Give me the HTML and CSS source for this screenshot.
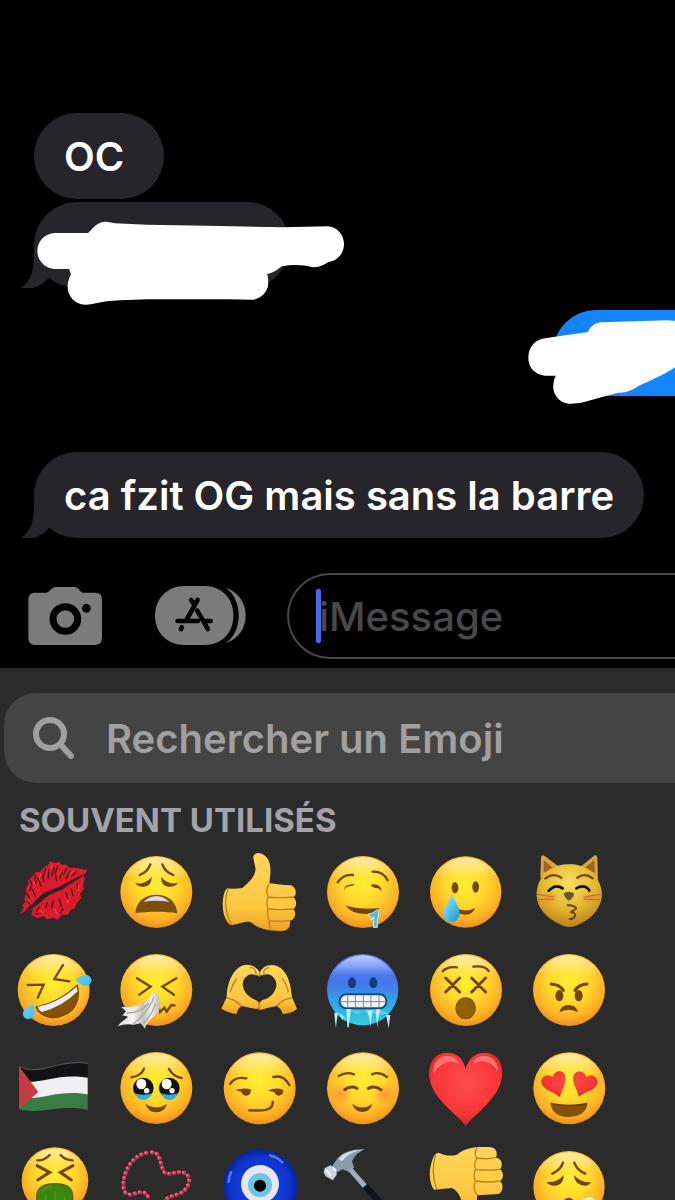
FILE: index.html
```
<!DOCTYPE html>
<html lang="fr">
<head>
    <meta charset="UTF-8">
    <meta name="viewport" content="width=device-width, initial-scale=1.0">
    <title>Messages</title>
    <link rel="stylesheet" href="styles.css">
</head>
<body>
    <svg class="defs" aria-hidden="true">
        <defs>
            <radialGradient id="face" cx="0.5" cy="0.38" r="0.64">
                <stop offset="0" stop-color="#ffee35"/>
                <stop offset="0.45" stop-color="#ffd82c"/>
                <stop offset="0.8" stop-color="#fcae26"/>
                <stop offset="1" stop-color="#e98a1a"/>
            </radialGradient>
            <linearGradient id="shine" x1="0" y1="0" x2="0" y2="1">
                <stop offset="0" stop-color="#fff" stop-opacity="0.6"/>
                <stop offset="0.3" stop-color="#fff" stop-opacity="0"/>
            </linearGradient>
            <linearGradient id="hand" x1="0" y1="0" x2="0" y2="1">
                <stop offset="0" stop-color="#ffd55a"/>
                <stop offset="0.7" stop-color="#fdc840"/>
                <stop offset="1" stop-color="#e9a023"/>
            </linearGradient>
            <linearGradient id="cold" x1="0" y1="0" x2="0" y2="1">
                <stop offset="0" stop-color="#5d80f5"/>
                <stop offset="0.4" stop-color="#4576ea"/>
                <stop offset="0.75" stop-color="#2cb0e6"/>
                <stop offset="1" stop-color="#2fd0dc"/>
            </linearGradient>
            <linearGradient id="drop" x1="0" y1="0" x2="1" y2="1">
                <stop offset="0" stop-color="#b5ecff"/>
                <stop offset="0.5" stop-color="#55c3f3"/>
                <stop offset="1" stop-color="#1c8fd6"/>
            </linearGradient>
            <radialGradient id="heart" cx="0.5" cy="0.4" r="0.65">
                <stop offset="0" stop-color="#ff4d4b"/>
                <stop offset="0.7" stop-color="#f83436"/>
                <stop offset="1" stop-color="#cf1626"/>
            </radialGradient>
            <radialGradient id="cat" cx="0.5" cy="0.3" r="0.7">
                <stop offset="0" stop-color="#f8e066"/>
                <stop offset="0.6" stop-color="#e2b62c"/>
                <stop offset="1" stop-color="#b98122"/>
            </radialGradient>
            <radialGradient id="blush">
                <stop offset="0" stop-color="#ff7a3c" stop-opacity="0.65"/>
                <stop offset="1" stop-color="#ff7a3c" stop-opacity="0"/>
            </radialGradient>
            <radialGradient id="bead" cx="0.5" cy="0.5" r="0.52">
                <stop offset="0" stop-color="#1446e0"/>
                <stop offset="0.75" stop-color="#0f35cf"/>
                <stop offset="1" stop-color="#0a1f8c"/>
            </radialGradient>
            <linearGradient id="tissue" x1="0" y1="0" x2="1" y2="0">
                <stop offset="0" stop-color="#d9d8d5"/>
                <stop offset="0.35" stop-color="#f7f6f3"/>
                <stop offset="0.6" stop-color="#c4c2be"/>
                <stop offset="0.8" stop-color="#f1f0ee"/>
                <stop offset="1" stop-color="#bdbbb8"/>
            </linearGradient>
        </defs>
    </svg>

    <main class="chat">
        <div class="bubble">OC</div>
        <div class="bubble hidden-text">
            <svg class="tail" viewBox="0 0 40 44"><path d="M14 0C14 22 14 35 1 44C13 46 22 42 29 34L40 22V0Z"/></svg>
            <svg class="scribble" viewBox="111 393 924 252"><path d="M162 429H264C280 414 292 394 320 395L345 400L440 404L660 408L850 412L985 409C1012 412 1033 435 1032 465C1030 494 1010 513 985 516C970 526 955 533 938 532C905 523 880 524 845 529C832 540 820 549 801 552C806 565 805 585 803 592C796 612 782 624 762 629L680 628H445L360 631L320 634C295 637 275 645 255 644C222 643 202 615 203 590C203 574 208 563 213 553L207 537H162C130 533 112 508 112 483C112 455 132 433 162 429Z"/></svg>
        </div>
        <div class="bubble sent">
            <svg class="scribble" viewBox="84 90 441 252"><path d="M525 92V232C490 256 450 272 415 288C395 303 375 308 350 309L250 337C230 341 218 342 206 341C175 338 157 310 160 285C161 272 163 264 168 257H135C104 254 85 232 85 204C85 170 106 147 140 144L264 126C271 108 287 98 306 97L500 91Z"/></svg>
        </div>
        <div class="bubble last">
            <svg class="tail" viewBox="0 0 40 44"><path d="M14 0C14 22 14 35 1 44C13 46 22 42 29 34L40 22V0Z"/></svg>
            ca fzit OG mais sans la barre
        </div>
    </main>

    <form class="composer">
        <button type="button" class="camera" aria-label="Appareil photo">
            <svg viewBox="84 78 222 180">
                <path fill="#7b7b7b" d="M104 98H138C150 98 152 81 168 81H222C238 81 238 98 250 98H286Q306 98 306 120V234Q306 255 284 255H106Q85 255 85 234V120Q85 98 104 98Z"/>
                <circle cx="196" cy="177" r="37" fill="none" stroke="#000" stroke-width="21"/>
                <circle cx="259" cy="145" r="13"/>
            </svg>
        </button>
        <button type="button" class="apps" aria-label="Applications">
            <svg viewBox="465 78 274 180">
                <path fill="#7b7b7b" d="M553 78H615C665 78 701 115 701 167S665 255 615 255H553C502 255 465 218 465 167S502 78 553 78Z"/>
                <path fill="#7b7b7b" d="M678 83C715 95 738 127 738 167S715 237 678 249C703 232 717 202 717 167S703 100 678 83Z"/>
                <g fill="none" stroke="#000" stroke-width="14" stroke-linecap="round">
                    <path d="M593 120L560 180M574 120L583 133M533 183H594M619 183H633M592 152L624 207M546 202L543 207"/>
                </g>
            </svg>
        </button>
        <div class="field">
            <input type="text" placeholder="iMessage" aria-label="iMessage">
            <span class="caret"></span>
        </div>
    </form>

    <section class="keyboard">
        <label class="search">
            <svg viewBox="0 0 42 42"><circle cx="17" cy="17" r="14"/><path d="M28 28L38 39"/></svg>
            <input type="text" placeholder="Rechercher un Emoji" aria-label="Rechercher un Emoji">
        </label>
        <h2>SOUVENT UTILISÉS</h2>
        <div class="emojis">
            <button aria-label="Bisou">
                <svg viewBox="39 36 240 240">
                    <path fill="#dc1c2c" d="M60 221L72 202L66 198L76 185L72 178L80 158L77 148L86 132L84 122L96 112L108 95L119 97L132 82L145 75L150 64L164 69L177 66L185 75L197 73L207 83L230 84L262 90L251 108L254 118L249 136L252 148L240 162L244 174L231 188L224 205L211 211L203 224L187 224L172 239L160 233L142 238L130 229L113 234L94 225L99 207L76 214Z"/>
                    <path fill="#2b2025" d="M76 210C104 190 120 161 149 151C182 144 210 119 258 100C235 119 209 132 190 147C164 159 148 162 135 174C120 188 103 205 76 214Z"/>
                    <path fill="none" stroke="#f0555c" stroke-width="3" d="M103 124L99 142M122 102L115 127M157 74L148 96M190 83L176 104M225 90L203 107M87 174L83 191M118 212L130 218M163 205L172 224M207 168L201 190M235 134L236 153"/>
                    <path fill="none" stroke="#47141d" stroke-width="4" d="M91 120L96 137L89 152M105 103L108 130M113 112L124 140M137 85L128 111L133 125M148 85L144 116M163 81L156 108M173 76L166 99L170 124M188 88L179 116M200 84L190 105M211 92L197 118M229 94L215 109M82 160L88 177M80 184L91 194M97 147L107 170M120 199L108 214M142 186L137 205M160 181L155 204M178 175L184 202M197 157L205 177M214 146L219 169M232 130L232 147M105 223L120 220M190 205L181 220"/>
                </svg>
            </button>
            <button aria-label="Visage épuisé">
                <svg viewBox="348 36 240 240">
                    <circle cx="469" cy="156" r="108" fill="url(#face)"/><circle cx="469" cy="156" r="104" fill="url(#shine)"/>
                    <path class="line" d="M419 105Q443 96 451 73M487 73Q495 96 520 105"/>
                    <path class="brown" d="M405 128Q431 137 455 111Q455 137 433 140Q414 142 405 128ZM483 111Q507 137 534 128Q525 142 505 140Q483 137 483 111Z"/>
                    <path fill="#79500c" d="M406 220C408 184 435 164 469 164S530 184 532 220C496 214 444 214 406 220Z"/>
                    <path fill="#d9d9e2" d="M430 186Q448 168 469 168T509 186Q470 178 430 186Z"/>
                </svg>
            </button>
            <button aria-label="Pouce levé">
                <svg viewBox="657 36 240 240">
                    <path fill="url(#hand)" d="M683 145C700 148 712 146 727 144C746 129 770 106 766 82L760 55C758 38 779 34 795 47C818 66 811 103 808 130C826 132 850 135 871 136C890 139 892 168 879 172C892 179 891 204 879 207C890 213 888 239 870 242C872 261 864 273 844 273C817 274 778 269 756 249C743 239 724 251 692 255C675 245 665 214 669 178C672 160 675 148 683 145Z"/>
                    <path class="crease" d="M806 134Q796 150 804 171Q798 190 804 207Q800 226 808 242Q806 258 812 270M804 171Q840 175 880 171M804 207Q840 211 878 207M808 242Q840 245 869 242M684 148C671 180 678 225 694 252"/>
                </svg>
            </button>
            <button aria-label="Visage qui bave">
                <svg viewBox="36 36 240 240">
                    <circle cx="159" cy="156" r="108" fill="url(#face)"/><circle cx="159" cy="156" r="104" fill="url(#shine)"/>
                    <path class="line" d="M83 127Q101 101 129 105M188 95Q220 94 233 121"/>
                    <path class="brown" d="M101 150Q104 132 135 132Q128 140 116 139Q107 141 101 150ZM181 134Q210 127 216 153Q205 142 194 143Q186 141 181 134ZM108 197Q157 211 208 204Q202 222 166 222Q122 220 108 197Z"/>
                    <path fill="#55b9e6" stroke="#c9f0fb" stroke-width="3" d="M174 223Q190 221 201 209Q209 211 205 229Q200 247 202 262H190Q192 241 191 229L185 240L180 230Z"/>
                </svg>
            </button>
            <button aria-label="Visage souriant avec larme">
                <svg viewBox="345 36 240 240">
                    <circle cx="467" cy="156" r="107" fill="url(#face)"/><circle cx="467" cy="156" r="103" fill="url(#shine)"/>
                    <ellipse class="brown" cx="435" cy="143" rx="10" ry="17"/><ellipse class="brown" cx="497" cy="141" rx="10" ry="17"/>
                    <path class="brown" d="M438 204Q468 219 495 204Q489 224 465 224Q447 224 438 214Z"/>
                    <path fill="url(#drop)" d="M425 163C438 190 450 206 449 222C447 239 436 246 424 246C409 246 399 235 399 220C400 203 415 190 425 163Z"/>
                </svg>
            </button>
            <button aria-label="Chat qui fait un bisou">
                <svg viewBox="654 36 240 240">
                    <path fill="#d9a43c" d="M691 115L693 52Q695 42 704 48L752 84ZM808 83L852 47Q861 43 862 53L864 118Z"/>
                    <path fill="#9c6520" d="M701 97L701 61L733 87ZM825 83L853 60L855 99Z"/>
                    <path fill="url(#cat)" d="M682 144C695 94 731 73 778 73S861 96 873 144C882 176 869 207 838 235Q798 263 777 261Q756 261 719 235C686 208 674 177 682 144Z"/>
                    <ellipse cx="716" cy="174" rx="30" ry="21" fill="url(#blush)"/><ellipse cx="840" cy="174" rx="30" ry="21" fill="url(#blush)"/>
                    <path class="line" d="M706 115Q729 97 754 113M802 113Q826 97 848 115"/>
                    <path fill="none" stroke="#101014" stroke-width="8" stroke-linecap="round" d="M721 148Q737 132 758 145M799 145Q821 132 836 148M721 148L716 152M836 148L838 152"/>
                    <path fill="#70552b" d="M761 160Q777 150 792 160Q791 175 777 182Q764 177 761 160Z"/>
                    <path fill="none" stroke="#67411a" stroke-width="6" stroke-linecap="round" d="M773 196Q800 197 798 206Q790 214 781 216Q799 219 795 229Q790 238 779 238"/>
                    <path fill="none" stroke="#8b5d22" stroke-width="2" d="M680 163L733 171M684 179L733 177M872 163L821 171M871 180L821 177"/>
                </svg>
            </button>

            <button aria-label="Mort de rire">
                <svg viewBox="39 30 240 240">
                    <circle cx="161" cy="150" r="108" fill="url(#face)"/><circle cx="161" cy="150" r="104" fill="url(#shine)"/>
                    <path class="line" d="M83 135L131 134L113 173M189 75L163 117L208 124"/>
                    <path fill="#875207" stroke="#754507" stroke-width="4" d="M108 202Q177 188 232 136C242 177 225 213 193 225C157 241 121 230 108 202Z"/>
                    <path fill="#eeeef3" d="M113 201Q177 187 230 140L233 154Q188 200 125 216Q116 211 113 201Z"/>
                    <path fill="url(#drop)" d="M226 119Q244 103 262 105Q276 111 274 124Q269 140 251 136Q240 133 226 119ZM100 190Q107 215 101 228Q94 240 79 236Q65 230 70 214Q79 203 100 190Z"/>
                </svg>
            </button>
            <button aria-label="Visage qui éternue">
                <svg viewBox="348 30 240 240">
                    <circle cx="469" cy="150" r="108" fill="url(#face)"/><circle cx="469" cy="150" r="104" fill="url(#shine)"/>
                    <path class="line" d="M411 115L452 140L418 164M529 115L487 140L522 164"/>
                    <path class="line" d="M478 208L480 216L493 203L500 215L514 195L524 196"/>
                    <path fill="url(#tissue)" d="M469 158C480 167 482 196 477 214C462 232 440 243 435 266L422 250L400 254Q377 250 354 258C364 242 378 238 384 230L367 226L378 214L363 200C405 206 438 189 457 161Q462 154 469 158Z"/>
                    <path fill="none" stroke="#aaa6a0" stroke-width="4" d="M462 170Q450 210 400 252M380 220Q420 219 448 190M467 190Q458 221 431 250"/>
                </svg>
            </button>
            <button aria-label="Mains en cœur">
                <svg viewBox="657 30 240 240">
                    <path fill="url(#hand)" d="M664 206L680 172C681 136 694 91 726 77C747 69 775 82 779 98C785 82 808 69 831 78C863 91 873 134 876 172L891 207C881 216 866 221 848 222Q844 204 829 198Q804 203 783 209Q775 209 773 203Q774 208 768 207Q745 202 725 198Q712 206 710 222Q682 218 664 206ZM779 107C760 106 757 98 744 106C720 121 727 148 742 164Q754 176 769 181L778 189L786 181Q805 176 818 162C832 145 835 122 815 107C798 98 791 107 779 107Z"/>
                    <path class="crease" d="M779 98V109M777 188V208M751 83Q768 82 768 105M806 83Q788 86 792 103M681 174Q703 177 724 197M874 174Q850 177 831 197M691 155Q697 133 709 117M865 155Q858 128 847 116"/>
                </svg>
            </button>
            <button aria-label="Visage gelé">
                <svg viewBox="36 30 240 240">
                    <circle cx="158" cy="149" r="107" fill="url(#cold)"/><circle cx="158" cy="149" r="103" fill="url(#shine)"/>
                    <ellipse cx="126" cy="128" rx="12" ry="16" fill="#103e78"/><ellipse cx="190" cy="128" rx="12" ry="16" fill="#103e78"/>
                    <path fill="#8fe4f5" opacity="0.45" d="M72 216Q96 214 108 238L122 209Q150 214 170 211L205 208L238 220L206 226L190 219L172 222L163 214L142 223L121 213L105 243L87 224Z"/>
                    <rect x="89" y="163" width="140" height="42" rx="20" fill="#f5f4f5" stroke="#134c7a" stroke-width="6"/>
                    <path fill="none" stroke="#788893" stroke-width="3" d="M90 185H228M113 165V204M136 165V204M160 165V204M183 165V204M207 165V204"/>
                    <path fill="#bfe9f5" d="M73 219H84L80 244L78 264L75 244ZM89 222L101 230L97 241ZM109 207H123L116 262H112ZM171 211H188L184 235L182 263L179 238ZM197 208H212L204 236L202 263L199 236ZM228 225H241L236 265Z"/>
                </svg>
            </button>
            <button aria-label="Visage étourdi">
                <svg viewBox="345 30 240 240">
                    <circle cx="468" cy="150" r="108" fill="url(#face)"/><circle cx="468" cy="150" r="104" fill="url(#shine)"/>
                    <path class="line" d="M398 94Q412 78 441 82M490 80Q525 76 536 93"/>
                    <path class="line thick" d="M407 114L449 156M449 114L407 156M485 114L527 156M527 114L485 156"/>
                    <ellipse cx="467" cy="205" rx="29" ry="31" fill="#946004" stroke="#815004" stroke-width="4"/>
                </svg>
            </button>
            <button aria-label="Visage en colère">
                <svg viewBox="654 30 240 240">
                    <circle cx="777" cy="150" r="108" fill="url(#face)"/><circle cx="777" cy="150" r="104" fill="url(#shine)"/>
                    <ellipse class="brown" cx="748" cy="167" rx="12" ry="17"/><ellipse class="brown" cx="806" cy="167" rx="12" ry="17"/>
                    <path class="line thick" d="M724 132Q749 134 760 151M831 132Q806 134 795 151"/>
                    <path class="brown" d="M748 217Q753 195 776 195T804 217Q776 201 748 217Z"/>
                </svg>
            </button>

            <button aria-label="Drapeau palestinien">
                <svg viewBox="39 24 240 240">
                    <path fill="#131316" d="M57 79C121 111 170 57 263 70V118C172 108 119 139 57 126Z"/>
                    <path fill="#efeff2" d="M57 122C118 137 170 97 263 113V165C173 155 113 186 57 173Z"/>
                    <path fill="#397d44" d="M57 170C119 186 170 147 263 163V210C180 191 121 226 57 207Z"/>
                    <path fill="#c63c43" d="M57 79L115 156L57 207Z"/>
                    <path fill="none" stroke="#77777b" stroke-width="2" d="M57 79C121 111 170 57 263 70"/>
                </svg>
            </button>
            <button aria-label="Visage ému">
                <svg viewBox="348 24 240 240">
                    <circle cx="469" cy="144" r="108" fill="url(#face)"/><circle cx="469" cy="144" r="104" fill="url(#shine)"/>
                    <path class="line" d="M394 112Q424 108 432 86M507 87Q520 110 545 114"/>
                    <ellipse cx="430" cy="144" rx="31" ry="31" fill="#16110b"/><ellipse cx="508" cy="144" rx="31" ry="31" fill="#16110b"/>
                    <path fill="#2fafe1" d="M404 160Q430 168 457 160Q446 181 430 180Q412 179 404 160ZM482 160Q508 168 534 160Q526 181 509 180Q490 179 482 160Z"/>
                    <g fill="#fff"><ellipse cx="424" cy="132" rx="15" ry="16"/><circle cx="440" cy="152" r="8"/><ellipse cx="500" cy="132" rx="15" ry="16"/><circle cx="516" cy="152" r="8"/></g>
                    <path class="brown" d="M436 191Q468 213 501 192Q494 216 468 217Q443 215 436 191Z"/>
                </svg>
            </button>
            <button aria-label="Sourire en coin">
                <svg viewBox="657 24 240 240">
                    <circle cx="779" cy="145" r="108" fill="url(#face)"/><circle cx="779" cy="145" r="104" fill="url(#shine)"/>
                    <path class="line" d="M690 132Q705 108 739 115M820 111Q851 103 868 135"/>
                    <path class="brown" d="M706 151Q730 142 752 148Q755 165 738 167Q726 165 724 155ZM804 152Q828 141 849 149Q853 165 837 167Q825 165 822 156Z"/>
                    <path class="line" d="M747 211C778 212 822 215 818 186"/>
                </svg>
            </button>
            <button aria-label="Visage souriant">
                <svg viewBox="36 24 240 240">
                    <circle cx="159" cy="145" r="108" fill="url(#face)"/><circle cx="159" cy="145" r="104" fill="url(#shine)"/>
                    <circle cx="93" cy="162" r="34" fill="url(#blush)"/><circle cx="223" cy="162" r="34" fill="url(#blush)"/>
                    <path class="line" d="M86 108Q110 94 132 103M186 103Q208 93 231 111"/>
                    <path class="line thick" d="M104 149Q122 136 141 145M175 145Q194 136 213 149"/>
                    <path class="brown" d="M127 191Q157 214 187 191Q182 214 157 216Q132 213 127 191Z"/>
                </svg>
            </button>
            <button aria-label="Cœur rouge">
                <svg viewBox="345 24 240 240">
                    <path fill="url(#heart)" d="M467 258C450 229 358 174 357 103C357 62 378 38 412 38C440 38 460 56 467 87C475 56 496 38 523 38C557 38 577 62 577 99C576 174 485 228 467 258Z"/>
                    <path fill="#fff" opacity="0.3" d="M370 101Q368 52 410 47Q436 47 449 72Q404 49 370 101ZM487 71Q499 47 524 47Q562 51 565 95Q535 48 487 71Z"/>
                </svg>
            </button>
            <button aria-label="Yeux en cœur">
                <svg viewBox="654 24 240 240">
                    <circle cx="778" cy="145" r="108" fill="url(#face)"/><circle cx="778" cy="145" r="104" fill="url(#shine)"/>
                    <path fill="url(#heart)" stroke="#ca5b20" stroke-width="2" d="M749 171C736 156 697 150 695 127C693 109 712 101 728 112C734 91 757 89 764 105C771 127 755 149 749 171ZM807 169C804 149 784 128 792 105C801 89 824 94 829 112C847 100 863 112 862 128C859 150 823 155 807 169Z"/>
                    <path fill="#855307" d="M721 190Q777 202 833 190C829 217 810 230 777 231S725 217 721 190Z"/>
                    <path fill="none" stroke="#6b3c00" stroke-width="5" d="M723 191Q777 203 831 191"/>
                </svg>
            </button>

            <button aria-label="Visage qui vomit">
                <svg viewBox="39 318 240 240">
                    <circle cx="165" cy="422" r="100" fill="url(#face)"/><circle cx="165" cy="422" r="96" fill="url(#shine)"/>
                    <path class="line" d="M112 361Q134 362 149 345M182 345Q194 360 218 361"/>
                    <path class="line thick" d="M111 377L149 397L113 420M219 377L181 397L214 420"/>
                    <path fill="#38870f" stroke="#6f5508" stroke-width="4" d="M110 500V466C113 437 138 431 165 431S216 437 218 466V500Z"/>
                    <path fill="none" stroke="#4f9c1c" stroke-width="4" d="M127 455Q137 438 157 440M137 490V465M165 490V454M194 490V469"/>
                </svg>
            </button>
            <button aria-label="Collier de perles">
                <svg viewBox="348 318 240 240">
                    <path fill="none" stroke="#c8365d" stroke-width="13" stroke-linecap="round" stroke-dasharray="1 14" d="M456 337C484 337 478 374 494 398C513 409 538 386 560 403C576 418 565 444 545 458C520 470 503 467 488 490"/>
                    <path fill="none" stroke="#c8365d" stroke-width="13" stroke-linecap="round" stroke-dasharray="1 14" d="M439 339C408 343 375 381 371 425C367 450 376 470 401 462C430 451 443 458 447 480"/>
                    <path fill="none" stroke="#ed89a3" stroke-width="5" stroke-linecap="round" stroke-dasharray="1 14" d="M454 335C482 335 476 372 492 396C511 407 536 384 558 401C574 416 563 442 543 456C518 468 501 465 486 488M437 337C406 341 373 379 369 423C365 448 374 468 399 460C428 449 441 456 445 478"/>
                </svg>
            </button>
            <button aria-label="Œil bleu">
                <svg viewBox="657 318 240 240">
                    <circle cx="781" cy="440" r="112" fill="url(#bead)"/>
                    <circle cx="780" cy="432" r="57" fill="#e5e7f4"/>
                    <circle cx="780" cy="435" r="36" fill="#6fc5da"/><circle cx="780" cy="437" r="18"/>
                    <path fill="none" stroke="#648bff" stroke-width="8" stroke-linecap="round" opacity="0.8" d="M686 425Q687 408 693 397M811 347Q833 352 847 367"/>
                </svg>
            </button>
            <button aria-label="Marteau">
                <svg viewBox="36 318 240 240">
                    <path fill="#8c9bac" d="M66 379L83 354Q108 326 165 328Q136 339 126 364L132 382L119 397L98 388L80 397Z"/>
                    <path fill="#d5dde5" d="M85 356Q109 329 160 329Q116 335 96 364Z"/>
                    <path fill="#c9d3dc" d="M44 385L61 376L79 386L80 405L68 421L47 409L41 397Z"/>
                    <path fill="none" stroke="#f4f7f9" stroke-width="5" d="M48 389L64 409M68 382L78 394"/>
                    <path fill="none" stroke="#9daebf" stroke-width="15" d="M121 389L167 441"/>
                    <path fill="none" stroke="#101318" stroke-width="20" d="M165 438L235 515"/>
                </svg>
            </button>
            <button aria-label="Pouce baissé">
                <svg viewBox="345 318 240 240">
                    <path fill="url(#hand)" d="M386 338C408 349 425 348 441 344C469 320 508 320 544 322C560 326 563 340 558 353C576 355 580 377 570 388C583 397 581 416 570 423C583 434 578 459 564 462L501 466V515C480 538 454 516 455 488C451 464 440 451 425 444L372 449C356 428 354 386 372 347Q377 340 386 338Z"/>
                    <path class="crease" d="M500 326Q491 341 500 354Q490 373 497 388Q488 406 496 423Q486 445 501 464M500 354Q528 359 557 353M497 388Q536 393 570 388M496 423Q535 429 569 423M376 346Q362 393 379 445"/>
                </svg>
            </button>
            <button aria-label="Visage qui souffle">
                <svg viewBox="654 318 240 240">
                    <circle cx="777" cy="440" r="107" fill="url(#face)"/><circle cx="777" cy="440" r="103" fill="url(#shine)"/>
                    <path class="line" d="M727 401Q753 389 759 368M793 368Q801 391 826 401"/>
                    <path class="brown" d="M710 426Q742 429 761 405Q762 432 739 437Q718 439 710 426ZM792 405Q812 430 844 426Q835 440 816 436Q793 429 792 405Z"/>
                    <ellipse class="brown" cx="776" cy="486" rx="15" ry="13"/>
                    <path fill="#eeeae5" d="M808 494Q813 473 830 475Q842 466 852 477Q869 481 867 501H808Z"/>
                </svg>
            </button>
        </div>
    </section>
</body>
</html>
```

FILE: styles.css
```
body{
    margin: 0;
    height: 100vh;
    display: flex;
    flex-direction: column;
    overflow: hidden;
    background-color: #000000;
    color: #ffffff;
    font-family: Inter, "Liberation Sans", sans-serif;
    font-size: 40px;
    font-weight: 600;
}
button{
    border: none;
    padding: 0;
    background: none;
}
svg{
    display: block;
}
input{
    border: none;
    padding: 0;
    min-width: 0;
    background: none;
    outline: none;
    color: inherit;
    font: inherit;
}
.defs{
    position: absolute;
    width: 0;
    height: 0;
}

/* conversation */
.chat{
    display: flex;
    flex-direction: column;
    align-items: flex-start;
    gap: 3px;
    padding: 113px 28px 35px 34px;
    overflow: hidden;
    flex-shrink: 0;
}
.bubble{
    position: relative;
    box-sizing: border-box;
    min-width: 130px;
    min-height: 86px;
    padding: 2px 30px 0;
    border-radius: 43px;
    background-color: #262529;
    line-height: 84px;
}
.hidden-text{
    width: 256px;
}
.sent{
    align-self: flex-end;
    width: 122px;
    min-width: 0;
    margin: 19px -28px 0 0;
    border-radius: 43px 0 0 43px;
    background-color: #1485fe;
}
.last{
    margin-top: 53px;
}
.tail{
    position: absolute;
    left: -14px;
    bottom: 0;
    width: 40px;
    height: 44px;
    fill: #262529;
}
.scribble{
    position: absolute;
    left: 3px;
    top: 19px;
    width: 308px;
    height: 84px;
    fill: #ffffff;
}
.sent .scribble{
    left: -25px;
    top: 10px;
    width: 147px;
}

/* message field */
.composer{
    display: flex;
    align-items: center;
    flex-shrink: 0;
    padding: 0 0 9px 28px;
}
.camera svg{
    width: 74px;
    height: 60px;
}
.apps{
    margin: 0 41px 0 53px;
}
.apps svg{
    width: 91px;
    height: 60px;
}
.field{
    position: relative;
    flex: 1;
    display: flex;
    box-sizing: border-box;
    height: 86px;
    padding-left: 30px;
    border: 2px solid #48484b;
    border-right: none;
    border-radius: 43px 0 0 43px;
    font-weight: 500;
}
.field input{
    flex: 1;
}
.field input::placeholder{
    color: #48484b;
    opacity: 1;
}
.caret{
    position: absolute;
    left: 27px;
    top: 14px;
    width: 5px;
    height: 54px;
    border-radius: 2px;
    background-color: #456af0;
}

/* emoji keyboard */
.keyboard{
    flex: 1;
    min-height: 0;
    overflow: hidden;
    padding-top: 25px;
    background-color: #2b2b2b;
}
.search{
    display: flex;
    align-items: center;
    gap: 31px;
    height: 90px;
    margin-left: 4px;
    padding-left: 29px;
    border-radius: 32px 0 0 32px;
    background-color: #444444;
    color: #a0a0a0;
}
.search svg{
    width: 42px;
    height: 42px;
    fill: none;
    stroke: #a0a0a0;
    stroke-width: 6;
    stroke-linecap: round;
}
.search input{
    flex: 1;
}
.search input::placeholder{
    color: #a0a0a0;
    opacity: 1;
}
h2{
    margin: 19px 0 5px 19px;
    color: #a3a3a8;
    font-size: 33px;
    font-weight: 700;
    line-height: 36px;
}
.emojis{
    display: grid;
    grid-template-columns: repeat(auto-fill, 103px);
    grid-auto-rows: 98px;
    padding-left: 1px;
}
.emojis button{
    display: flex;
    align-items: center;
    justify-content: center;
}
.emojis svg{
    width: 80px;
    height: 80px;
}
.brown{
    fill: #744509;
}
.line{
    fill: none;
    stroke: #744509;
    stroke-width: 7px;
    stroke-linecap: round;
}
.thick{
    stroke-width: 9px;
}
.crease{
    fill: none;
    stroke: #c27f1a;
    stroke-width: 4px;
    stroke-linecap: round;
}
```
